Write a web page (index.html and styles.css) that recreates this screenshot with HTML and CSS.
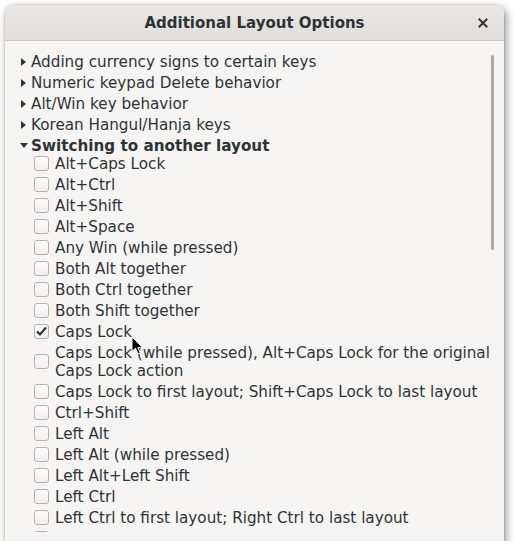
FILE: index.html
```html
<!DOCTYPE html>
<html lang="en">
<head>
  <meta charset="UTF-8">
  <meta name="viewport" content="width=device-width, initial-scale=1.0">
  <title>Additional Layout Options</title>
  <link rel="stylesheet" href="styles.css">
</head>
<body>
  <!-- Dialog window -->
  <div class="dialog">
    <header class="titlebar">
      <span class="title">Additional Layout Options</span>
      <button class="close" aria-label="Close">
        <svg width="10" height="10" viewBox="0 0 10 10">
          <path d="M1.5 1.5 L8.5 8.5 M8.5 1.5 L1.5 8.5" stroke="#2e3436" stroke-width="2" stroke-linecap="square"/>
        </svg>
      </button>
    </header>

    <div class="content">
      <!-- Option groups -->
      <ul class="groups">
        <li class="group"><span class="arrow"></span>Adding currency signs to certain keys</li>
        <li class="group"><span class="arrow"></span>Numeric keypad Delete behavior</li>
        <li class="group"><span class="arrow"></span>Alt/Win key behavior</li>
        <li class="group"><span class="arrow"></span>Korean Hangul/Hanja keys</li>
        <li class="group open"><span class="arrow"></span>Switching to another layout</li>
      </ul>

      <!-- Options of the open group -->
      <ul class="options">
        <li><span class="check"></span><span class="label">Alt+Caps Lock</span></li>
        <li><span class="check"></span><span class="label">Alt+Ctrl</span></li>
        <li><span class="check"></span><span class="label">Alt+Shift</span></li>
        <li><span class="check"></span><span class="label">Alt+Space</span></li>
        <li><span class="check"></span><span class="label">Any Win (while pressed)</span></li>
        <li><span class="check"></span><span class="label">Both Alt together</span></li>
        <li><span class="check"></span><span class="label">Both Ctrl together</span></li>
        <li><span class="check"></span><span class="label">Both Shift together</span></li>
        <li>
          <span class="check checked">
            <svg width="13" height="13" viewBox="0 0 13 13">
              <path d="M2 6.5 L5 9.5 L11 2.5" fill="none" stroke="#2e3436" stroke-width="2.2"/>
            </svg>
          </span>
          <span class="label">Caps Lock</span>
        </li>
        <li><span class="check"></span><span class="label">Caps Lock (while pressed), Alt+Caps Lock for the original Caps Lock action</span></li>
        <li><span class="check"></span><span class="label">Caps Lock to first layout; Shift+Caps Lock to last layout</span></li>
        <li><span class="check"></span><span class="label">Ctrl+Shift</span></li>
        <li><span class="check"></span><span class="label">Left Alt</span></li>
        <li><span class="check"></span><span class="label">Left Alt (while pressed)</span></li>
        <li><span class="check"></span><span class="label">Left Alt+Left Shift</span></li>
        <li><span class="check"></span><span class="label">Left Ctrl</span></li>
        <li><span class="check"></span><span class="label">Left Ctrl to first layout; Right Ctrl to last layout</span></li>
        <li><span class="check"></span><span class="label">Left Ctrl+Left Shift</span></li>
      </ul>

      <div class="scrollbar"></div>

      <!-- mouse pointer -->
      <svg class="pointer" width="13" height="19" viewBox="0 0 13 19">
        <path d="M1 1 L1 15.5 L4.5 12.2 L7 17.8 L9.2 16.8 L6.8 11.4 L11.5 11.4 Z" fill="#000" stroke="#fff" stroke-width="1"/>
      </svg>
    </div>
  </div>
</body>
</html>
```

FILE: styles.css
```css
body {
  margin: 0;
  background: #fff;
  font-family: "DejaVu Sans", sans-serif;
  color: #2e3436;
}

/* The dialog window with its shadow */
.dialog {
  margin: 5px 0 0 5px;
  width: 499px;
  height: 536px;
  border-radius: 8px 8px 0 0;
  overflow: hidden;
  background: #f6f5f4;
  box-shadow: 2px 3px 8px rgba(0, 0, 0, 0.45), 0 0 0 1px rgba(0, 0, 0, 0.06);
}

.titlebar {
  height: 35px;
  border-bottom: 1px solid #cdc7c2;
  background: linear-gradient(#e9e7e4, #e1dedb);
  display: grid;
  grid-template-columns: 1fr auto 1fr;
  align-items: center;
}

.title {
  grid-column: 2;
  font-size: 15px;
  font-weight: bold;
}

.close {
  justify-self: end;
  margin-right: 8px;
  width: 26px;
  height: 26px;
  padding: 0;
  border: none;
  background: none;
  display: flex;
  align-items: center;
  justify-content: center;
}

/* Scrolled list, with an empty strip below it */
.content {
  position: relative;
  height: 491px;
  overflow: hidden;
  font-size: 15.2px;
  line-height: 18px;
}

ul {
  list-style: none;
  margin: 0;
  padding: 0;
}

.groups {
  padding: 10px 0 0 16px;
}

.group {
  display: flex;
  align-items: center;
  height: 21px;
}

.arrow {
  width: 10px;
  height: 21px;
  display: flex;
  align-items: center;
}

.arrow::before {
  content: "";
  border-left: 5px solid #2e3436;
  border-top: 4px solid transparent;
  border-bottom: 4px solid transparent;
}

.group.open {
  font-weight: bold;
}

.group.open .arrow::before {
  margin-left: -1px;
  border-top: 5px solid #2e3436;
  border-left: 4px solid transparent;
  border-right: 4px solid transparent;
  border-bottom: none;
}

.options {
  margin-top: -3px;
  padding: 0 12px 0 29px;
}

.options li {
  display: flex;
  align-items: center;
  gap: 6px;
  padding: 1.5px 0;
}

.check {
  flex: none;
  width: 13px;
  height: 13px;
  border: 1px solid #b9b2ab;
  border-radius: 3px;
  background: linear-gradient(#fdfdfc, #f1f0ef);
  display: flex;
  align-items: center;
  justify-content: center;
}

.check svg {
  display: block;
}

/* overlay scrollbar indicator */
.scrollbar {
  position: absolute;
  left: 486px;
  top: 14px;
  width: 3px;
  height: 195px;
  border-radius: 2px;
  background: #a9a9a9;
}

.pointer {
  position: absolute;
  left: 126px;
  top: 295px;
}
```
